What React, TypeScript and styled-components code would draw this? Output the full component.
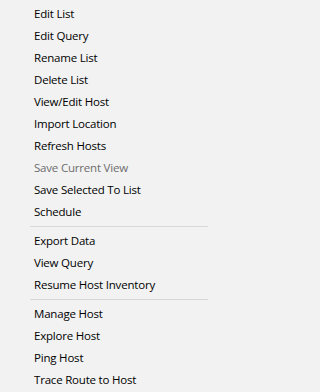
import { createGlobalStyle } from "styled-components";
import styled from "styled-components";

// plain windows-style context menu
const GlobalStyle = createGlobalStyle`
  html, body {
    margin: 0;
    padding: 0;
    background: #f2f2f2;
  }
`;

type MenuEntry = { label: string; disabled?: boolean } | "sep";

const entries: MenuEntry[] = [
    { label: "Edit List" },
    { label: "Edit Query" },
    { label: "Rename List" },
    { label: "Delete List" },
    { label: "View/Edit Host" },
    { label: "Import Location" },
    { label: "Refresh Hosts" },
    { label: "Save Current View", disabled: true },
    { label: "Save Selected To List" },
    { label: "Schedule" },
    "sep",
    { label: "Export Data" },
    { label: "View Query" },
    { label: "Resume Host Inventory" },
    "sep",
    { label: "Manage Host" },
    { label: "Explore Host" },
    { label: "Ping Host" },
    { label: "Trace Route to Host" },
];

const Menu = styled.ul`
  list-style: none;
  margin: 0;
  padding: 2px 0;
  width: 210px;
  height: 392px;
  box-sizing: border-box;
  background: #f2f2f2;
  display: flex;
  flex-direction: column;
  font-family: "Segoe UI", "Open Sans", "Noto Sans", sans-serif;
  font-size: 11.5px;
  letter-spacing: -0.2px;
`;

const Item = styled.li<{ $disabled?: boolean }>`
  height: 22px;
  display: flex;
  align-items: center;
  padding-left: 34px;
  color: ${(props) => (props.$disabled ? "#6d6d6d" : "#000000")};
  white-space: nowrap;
  cursor: default;
`;

const Separator = styled.li`
  height: 1px;
  margin: 4px 2px 2px 30px;
  background: #d7d7d7;
`;

export default function App() {
    return (
        <>
            <GlobalStyle />
            <Menu>
                {entries.map((entry, index) =>
                    entry === "sep" ? (
                        <Separator key={index} />
                    ) : (
                        <Item key={index} $disabled={entry.disabled}>
                            {entry.label}
                        </Item>
                    )
                )}
            </Menu>
        </>
    );
}
